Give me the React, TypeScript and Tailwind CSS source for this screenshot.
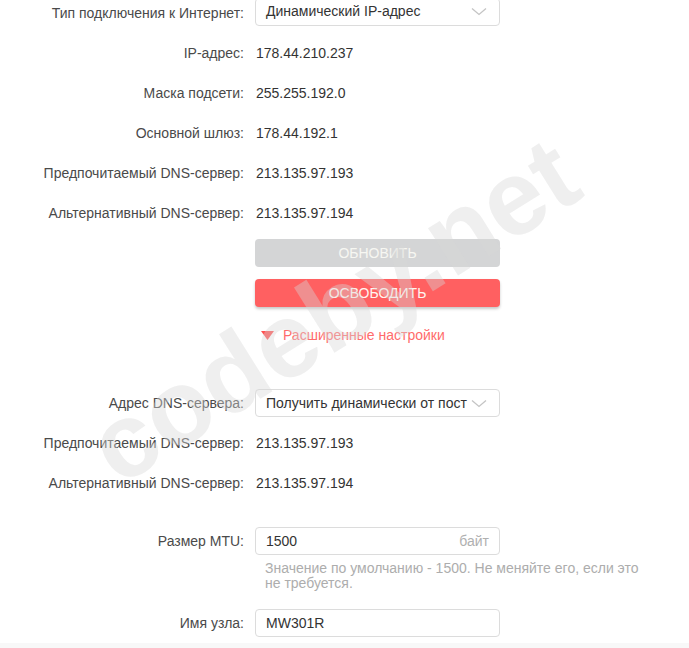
import React from "react";

const font = { fontFamily: '"Liberation Sans", Arial, sans-serif' };

function Chevron() {
  return (
    <svg width="16" height="9" viewBox="0 0 16 9" fill="none">
      <path d="M1 1.5 L8 7.5 L15 1.5" stroke="#c4c4c4" strokeWidth="1.3" />
    </svg>
  );
}

function Row({ label, children }: { label: string; children: React.ReactNode }) {
  return (
    <div className="flex h-[40px] items-center">
      <div className="w-[244px] shrink-0 text-right text-[14px] text-[#4a4a4a]">{label}</div>
      <div className="ml-[11px] w-[245px] shrink-0 text-[14px] text-[#333]">{children}</div>
    </div>
  );
}

function Select({ value }: { value: string }) {
  return (
    <div className="flex h-[28px] items-center justify-between rounded-[4px] border border-[#dcdcdc] bg-white pl-[10px] pr-[12px]">
      <span className="whitespace-nowrap text-[14px] text-[#333]">{value}</span>
      <Chevron />
    </div>
  );
}

function Value({ v }: { v: string }) {
  return <span className="pl-px">{v}</span>;
}

export default function App() {
  return (
    <div className="relative h-[648px] w-[689px] overflow-hidden bg-white" style={font}>
      <div className="mt-[-7px] flex flex-col">
        <Row label="Тип подключения к Интернет:">
          <div className="mt-[-3px]">
            <Select value="Динамический IP-адрес" />
          </div>
        </Row>
        <Row label="IP-адрес:"><Value v="178.44.210.237" /></Row>
        <Row label="Маска подсети:"><Value v="255.255.192.0" /></Row>
        <Row label="Основной шлюз:"><Value v="178.44.192.1" /></Row>
        <Row label="Предпочитаемый DNS-сервер:"><Value v="213.135.97.193" /></Row>
        <Row label="Альтернативный DNS-сервер:"><Value v="213.135.97.194" /></Row>

        <div className="ml-[255px] mt-[6px] flex w-[245px] flex-col">
          <div className="flex h-[28px] items-center justify-center rounded-[4px] bg-[#d4d5d6] text-[14px] text-[#f7f7f2]">
            ОБНОВИТЬ
          </div>
          <div className="mt-[12px] flex h-[28px] items-center justify-center rounded-[4px] bg-[#ff6061] text-[14px] text-[#fff5f0] shadow-[0_2px_3px_rgba(0,0,0,0.22)]">
            ОСВОБОДИТЬ
          </div>
          <div className="mt-[18px] flex h-[20px] items-center pl-[6px]">
            <svg width="13" height="9" viewBox="0 0 13 9">
              <polygon points="0,0 13,0 6.5,9" fill="#ff4f4f" />
            </svg>
            <span className="ml-[9px] text-[14px] text-[#ff6b6b]">Расширенные настройки</span>
          </div>
        </div>

        <div className="mt-[38px]">
          <Row label="Адрес DNS-сервера:">
            <Select value="Получить динамически от пост" />
          </Row>
        </div>
        <Row label="Предпочитаемый DNS-сервер:"><Value v="213.135.97.193" /></Row>
        <Row label="Альтернативный DNS-сервер:"><Value v="213.135.97.194" /></Row>

        <div className="mt-[18px]">
          <Row label="Размер MTU:">
            <div className="flex h-[28px] items-center justify-between rounded-[4px] border border-[#dcdcdc] bg-white pl-[10px] pr-[10px]">
              <span className="text-[14px] text-[#333]">1500</span>
              <span className="text-[14px] text-[#b0b0b0]">байт</span>
            </div>
          </Row>
        </div>
        <div className="ml-[265px] w-[385px] text-[14px] leading-[15px] text-[#adadad]">
          Значение по умолчанию - 1500. Не меняйте его, если это не требуется.
        </div>
        <div className="mt-[12px]">
          <Row label="Имя узла:">
            <div className="flex h-[28px] items-center rounded-[4px] border border-[#dcdcdc] bg-white pl-[10px]">
              <span className="text-[14px] text-[#333]">MW301R</span>
            </div>
          </Row>
        </div>
        <div className="h-[20px] bg-[#f8f8f8]" />
      </div>

      <div className="pointer-events-none absolute left-[333px] top-[310px] -translate-x-1/2 -translate-y-1/2 -rotate-[32deg] whitespace-nowrap text-[106px] font-bold leading-none text-[rgba(215,215,215,0.4)]">
        codeby.net
      </div>
    </div>
  );
}
